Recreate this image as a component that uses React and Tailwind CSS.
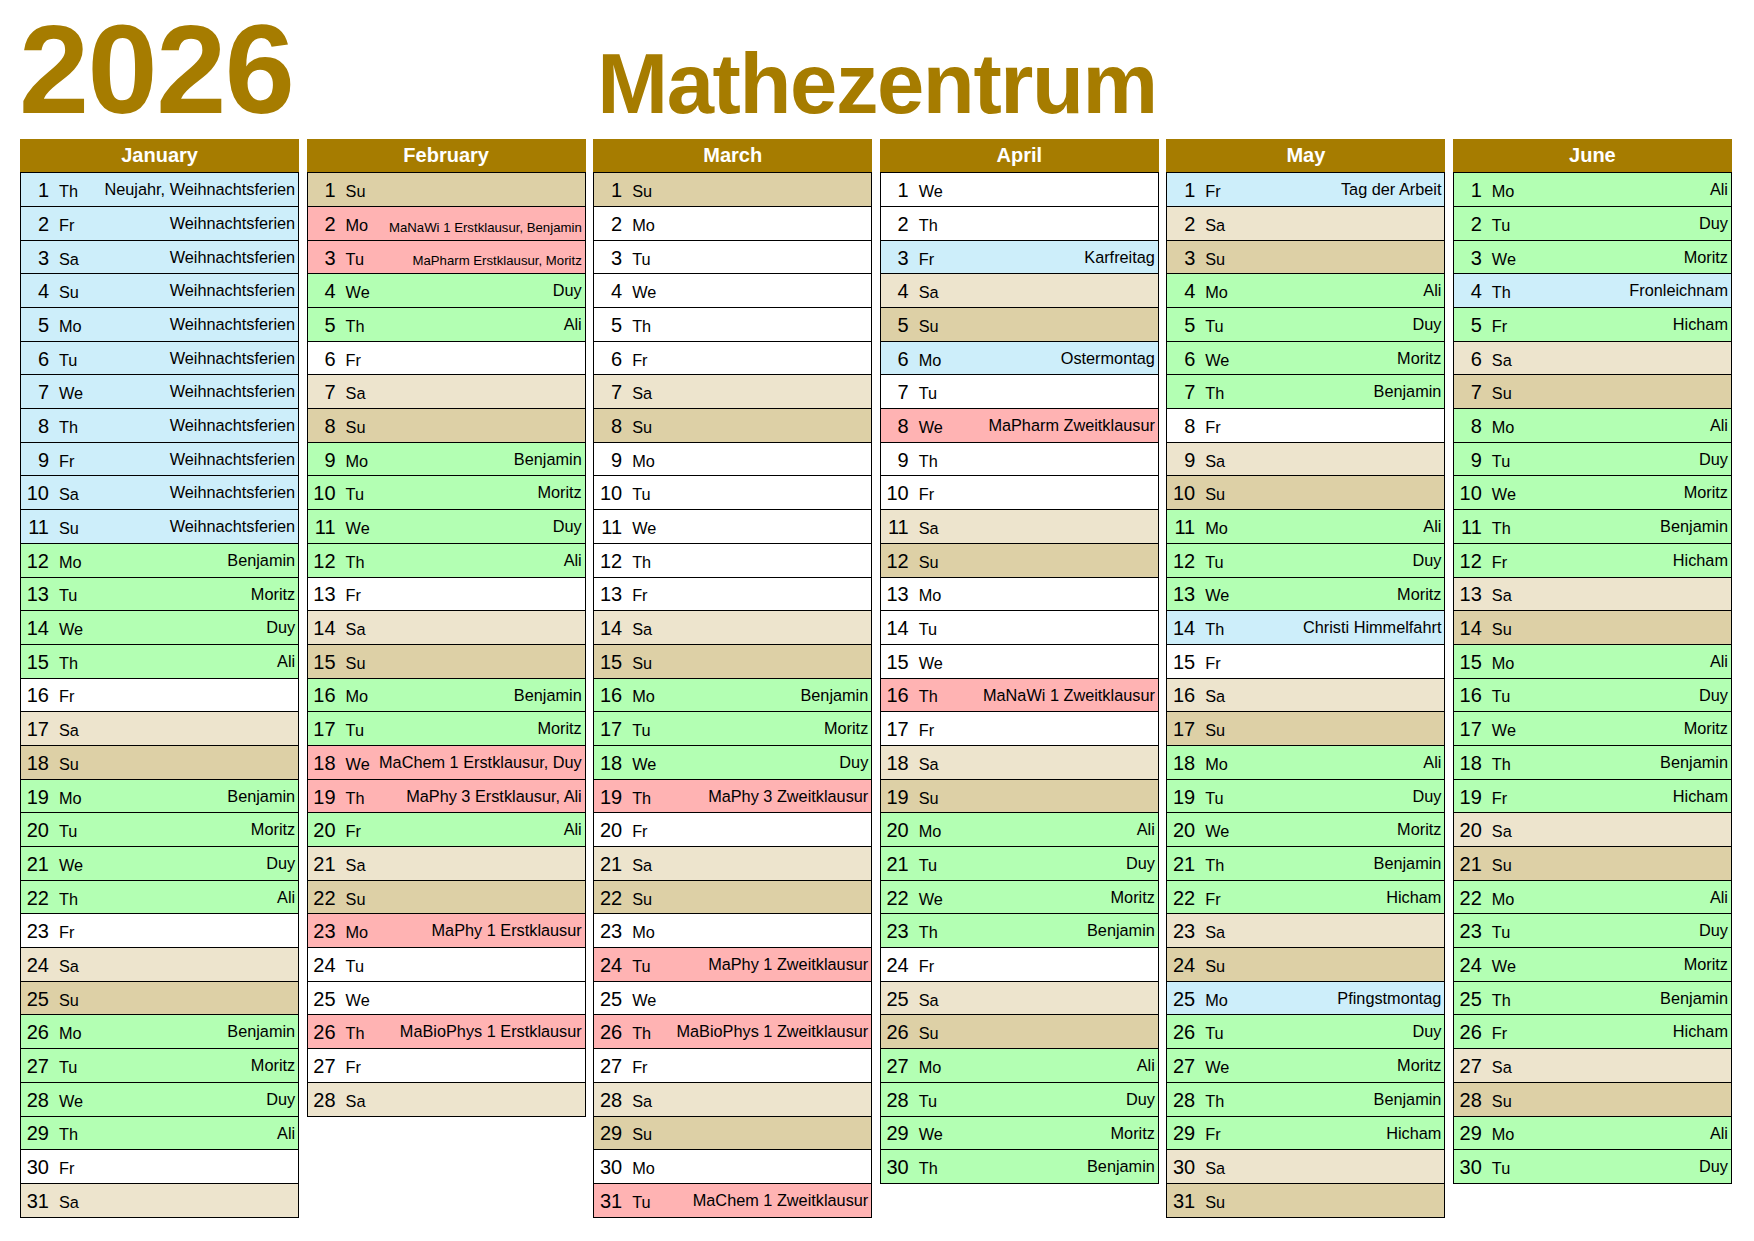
import React from "react";

const WD = ["Mo", "Tu", "We", "Th", "Fr", "Sa", "Su"];

// kind: h = Feiertag/Ferien (blau), g = Tutor (grün), p = Klausur (rot), ps = Klausur klein
function range(from, to, text, kind, ev = {}) {
  for (let d = from; d <= to; d++) ev[d] = [text, kind];
  return ev;
}

const janEv = range(2, 11, "Weihnachtsferien", "h", {
  1: ["Neujahr, Weihnachtsferien", "h"],
  12: ["Benjamin", "g"], 13: ["Moritz", "g"], 14: ["Duy", "g"], 15: ["Ali", "g"],
  19: ["Benjamin", "g"], 20: ["Moritz", "g"], 21: ["Duy", "g"], 22: ["Ali", "g"],
  26: ["Benjamin", "g"], 27: ["Moritz", "g"], 28: ["Duy", "g"], 29: ["Ali", "g"],
});

const febEv = {
  2: ["MaNaWi 1 Erstklausur, Benjamin", "ps"],
  3: ["MaPharm Erstklausur, Moritz", "ps"],
  4: ["Duy", "g"], 5: ["Ali", "g"],
  9: ["Benjamin", "g"], 10: ["Moritz", "g"], 11: ["Duy", "g"], 12: ["Ali", "g"],
  16: ["Benjamin", "g"], 17: ["Moritz", "g"],
  18: ["MaChem 1 Erstklausur, Duy", "p"],
  19: ["MaPhy 3 Erstklausur, Ali", "p"],
  20: ["Ali", "g"],
  23: ["MaPhy 1 Erstklausur", "p"],
  26: ["MaBioPhys 1 Erstklausur", "p"],
};

const marEv = {
  16: ["Benjamin", "g"], 17: ["Moritz", "g"], 18: ["Duy", "g"],
  19: ["MaPhy 3 Zweitklausur", "p"],
  24: ["MaPhy 1 Zweitklausur", "p"],
  26: ["MaBioPhys 1 Zweitklausur", "p"],
  31: ["MaChem 1 Zweitklausur", "p"],
};

const aprEv = {
  3: ["Karfreitag", "h"],
  6: ["Ostermontag", "h"],
  8: ["MaPharm Zweitklausur", "p"],
  16: ["MaNaWi 1 Zweitklausur", "p"],
  20: ["Ali", "g"], 21: ["Duy", "g"], 22: ["Moritz", "g"], 23: ["Benjamin", "g"],
  27: ["Ali", "g"], 28: ["Duy", "g"], 29: ["Moritz", "g"], 30: ["Benjamin", "g"],
};

const mayEv = {
  1: ["Tag der Arbeit", "h"],
  4: ["Ali", "g"], 5: ["Duy", "g"], 6: ["Moritz", "g"], 7: ["Benjamin", "g"],
  11: ["Ali", "g"], 12: ["Duy", "g"], 13: ["Moritz", "g"],
  14: ["Christi Himmelfahrt", "h"],
  18: ["Ali", "g"], 19: ["Duy", "g"], 20: ["Moritz", "g"], 21: ["Benjamin", "g"], 22: ["Hicham", "g"],
  25: ["Pfingstmontag", "h"],
  26: ["Duy", "g"], 27: ["Moritz", "g"], 28: ["Benjamin", "g"], 29: ["Hicham", "g"],
};

const junEv = {
  1: ["Ali", "g"], 2: ["Duy", "g"], 3: ["Moritz", "g"],
  4: ["Fronleichnam", "h"],
  5: ["Hicham", "g"],
  8: ["Ali", "g"], 9: ["Duy", "g"], 10: ["Moritz", "g"], 11: ["Benjamin", "g"], 12: ["Hicham", "g"],
  15: ["Ali", "g"], 16: ["Duy", "g"], 17: ["Moritz", "g"], 18: ["Benjamin", "g"], 19: ["Hicham", "g"],
  22: ["Ali", "g"], 23: ["Duy", "g"], 24: ["Moritz", "g"], 25: ["Benjamin", "g"], 26: ["Hicham", "g"],
  29: ["Ali", "g"], 30: ["Duy", "g"],
};

const months = [
  { name: "January", days: 31, start: 3, ev: janEv },
  { name: "February", days: 28, start: 6, ev: febEv },
  { name: "March", days: 31, start: 6, ev: marEv },
  { name: "April", days: 30, start: 2, ev: aprEv },
  { name: "May", days: 31, start: 4, ev: mayEv },
  { name: "June", days: 30, start: 0, ev: junEv },
];

function rowBg(wd, kind) {
  if (kind === "h") return "bg-[#cdeefa]";
  if (kind === "g") return "bg-[#b3ffb3]";
  if (kind === "p" || kind === "ps") return "bg-[#ffb3b3]";
  if (wd === 5) return "bg-[#ede4cd]";
  if (wd === 6) return "bg-[#ddd0a6]";
  return "bg-white";
}

function DayRow({ day, wd, entry }) {
  const [text, kind] = entry || [];
  return (
    <div className={`flex items-center h-[33.69px] border-t border-black ${rowBg(wd, kind)}`}>
      <div className="flex items-baseline pt-[2px] shrink-0">
        <span className="w-[28px] text-right text-[20px]">{day}</span>
        <span className="ml-[10px] text-[16.3px]">{WD[wd]}</span>
      </div>
      {text && (
        <span
          className={`flex-1 text-right pr-[3px] whitespace-nowrap ${
            kind === "ps" ? "text-[13.2px] pt-[8px]" : "text-[16.3px]"
          }`}
        >
          {text}
        </span>
      )}
    </div>
  );
}

function Month({ m }) {
  const rows = [];
  for (let d = 1; d <= m.days; d++) {
    const wd = (m.start + d - 1) % 7;
    rows.push(<DayRow key={d} day={d} wd={wd} entry={m.ev[d]} />);
  }
  return (
    <div className="flex flex-col">
      <div className="h-[33.3px] bg-[#a67c00] text-white font-bold text-[20px] flex items-center justify-center">
        {m.name}
      </div>
      <div className="border-x border-b border-black">{rows}</div>
    </div>
  );
}

export default function App() {
  return (
    <div
      className="w-[1754px] h-[1241px] bg-white text-black leading-[1.15] overflow-hidden"
      style={{ fontFamily: '"Liberation Sans", Arial, Helvetica, sans-serif' }}
    >
      <div className="h-[139px] grid grid-cols-[1fr_auto_1fr] items-baseline pt-[6.6px] text-[#a67c00] font-bold">
        <div className="pl-[19px] text-[126px] leading-none tracking-[-1.5px]">2026</div>
        <div className="text-[85px] leading-none tracking-[-1.4px]">Mathezentrum</div>
        <div />
      </div>
      <div className="ml-[20px] w-[1712px] grid grid-cols-6 gap-x-[7.4px] items-start">
        {months.map((m) => (
          <Month key={m.name} m={m} />
        ))}
      </div>
    </div>
  );
}
